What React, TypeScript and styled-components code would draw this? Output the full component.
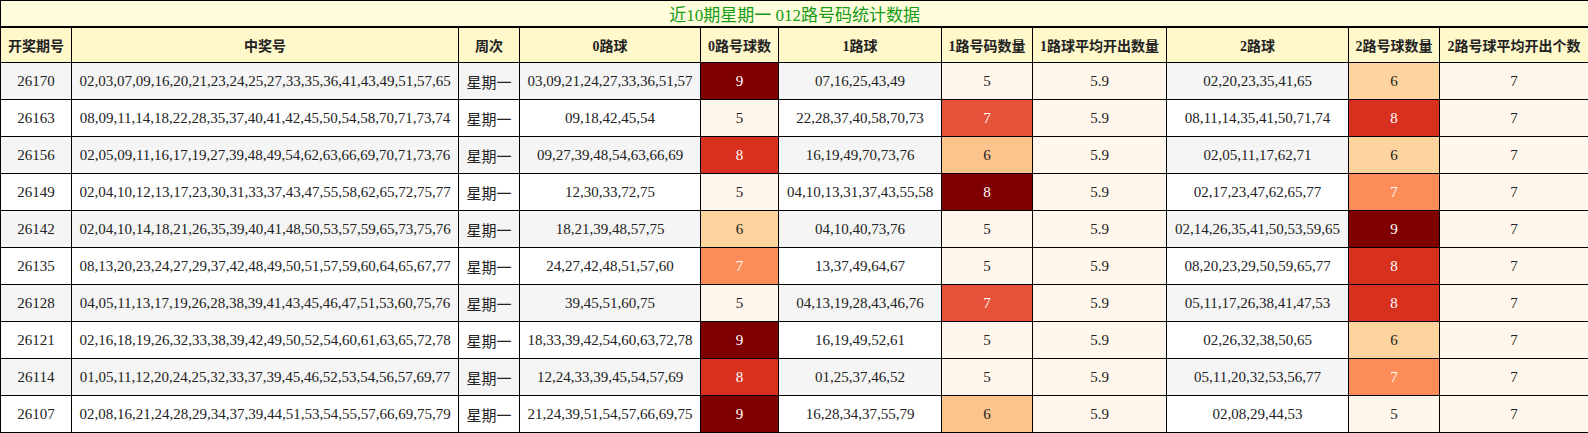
import styled, { createGlobalStyle } from "styled-components";

type Draw = {
  issue: string;
  numbers: string;
  weekday: string;
  road0: string;
  road1: string;
  road2: string;
};

const draws: Draw[] = [
  { issue: "26170", numbers: "02,03,07,09,16,20,21,23,24,25,27,33,35,36,41,43,49,51,57,65", weekday: "星期一", road0: "03,09,21,24,27,33,36,51,57", road1: "07,16,25,43,49", road2: "02,20,23,35,41,65" },
  { issue: "26163", numbers: "08,09,11,14,18,22,28,35,37,40,41,42,45,50,54,58,70,71,73,74", weekday: "星期一", road0: "09,18,42,45,54", road1: "22,28,37,40,58,70,73", road2: "08,11,14,35,41,50,71,74" },
  { issue: "26156", numbers: "02,05,09,11,16,17,19,27,39,48,49,54,62,63,66,69,70,71,73,76", weekday: "星期一", road0: "09,27,39,48,54,63,66,69", road1: "16,19,49,70,73,76", road2: "02,05,11,17,62,71" },
  { issue: "26149", numbers: "02,04,10,12,13,17,23,30,31,33,37,43,47,55,58,62,65,72,75,77", weekday: "星期一", road0: "12,30,33,72,75", road1: "04,10,13,31,37,43,55,58", road2: "02,17,23,47,62,65,77" },
  { issue: "26142", numbers: "02,04,10,14,18,21,26,35,39,40,41,48,50,53,57,59,65,73,75,76", weekday: "星期一", road0: "18,21,39,48,57,75", road1: "04,10,40,73,76", road2: "02,14,26,35,41,50,53,59,65" },
  { issue: "26135", numbers: "08,13,20,23,24,27,29,37,42,48,49,50,51,57,59,60,64,65,67,77", weekday: "星期一", road0: "24,27,42,48,51,57,60", road1: "13,37,49,64,67", road2: "08,20,23,29,50,59,65,77" },
  { issue: "26128", numbers: "04,05,11,13,17,19,26,28,38,39,41,43,45,46,47,51,53,60,75,76", weekday: "星期一", road0: "39,45,51,60,75", road1: "04,13,19,28,43,46,76", road2: "05,11,17,26,38,41,47,53" },
  { issue: "26121", numbers: "02,16,18,19,26,32,33,38,39,42,49,50,52,54,60,61,63,65,72,78", weekday: "星期一", road0: "18,33,39,42,54,60,63,72,78", road1: "16,19,49,52,61", road2: "02,26,32,38,50,65" },
  { issue: "26114", numbers: "01,05,11,12,20,24,25,32,33,37,39,45,46,52,53,54,56,57,69,77", weekday: "星期一", road0: "12,24,33,39,45,54,57,69", road1: "01,25,37,46,52", road2: "05,11,20,32,53,56,77" },
  { issue: "26107", numbers: "02,08,16,21,24,28,29,34,37,39,44,51,53,54,55,57,66,69,75,79", weekday: "星期一", road0: "21,24,39,51,54,57,66,69,75", road1: "16,28,34,37,55,79", road2: "02,08,29,44,53" },
];

const headers = [
  "开奖期号",
  "中奖号",
  "周次",
  "0路球",
  "0路号球数",
  "1路球",
  "1路号码数量",
  "1路球平均开出数量",
  "2路球",
  "2路号球数量",
  "2路号球平均开出个数",
];

const colWidths = [71, 387, 61, 181, 78, 163, 91, 134, 182, 91, 149];

// OrRd, light to dark
const scale = ["#fff7ec", "#fee8c8", "#fdd49e", "#fdbb84", "#fc8d59", "#ef6548", "#d7301f", "#b30000", "#7f0000"];

const hexToRgb = (h: string) => [1, 3, 5].map((i) => parseInt(h.slice(i, i + 2), 16));

function heat(value: number, min: number, max: number) {
  const t = max === min ? 0 : (value - min) / (max - min);
  const pos = t * (scale.length - 1);
  const i = Math.min(Math.floor(pos), scale.length - 2);
  const f = pos - i;
  const a = hexToRgb(scale[i]);
  const b = hexToRgb(scale[i + 1]);
  const rgb = a.map((v, k) => Math.round(v + (b[k] - v) * f));
  return { bg: `rgb(${rgb.join(",")})`, light: t >= 0.5 };
}

const count = (s: string) => s.split(",").length;

const GlobalStyle = createGlobalStyle`
  html, body {
    margin: 0;
    padding: 0;
    background: #fff;
  }
`;

const Table = styled.table`
  width: 1588px;
  table-layout: fixed;
  border-collapse: collapse;
  font-family: "Liberation Serif", "Noto Sans CJK SC", serif;
  color: #222;
`;

const TitleCell = styled.th`
  height: 24px;
  padding: 0;
  border: 1px solid #000;
  border-bottom: 2px solid #000;
  background: #fffddc;
  color: #169b16;
  font-size: 17px;
  font-weight: normal;
  text-align: center;
`;

const HeadCell = styled.th`
  height: 34px;
  padding: 0;
  border: 1px solid #000;
  background: #fff8cb;
  font-size: 14px;
  font-weight: bold;
  text-align: center;
  white-space: nowrap;
`;

const Row = styled.tr<{ $striped: boolean }>`
  background: ${(p) => (p.$striped ? "#f5f5f5" : "#ffffff")};
`;

const Cell = styled.td`
  height: 36px;
  padding: 0;
  border: 1px solid #000;
  font-size: 15px;
  text-align: center;
  white-space: nowrap;
`;

const HeatCell = styled(Cell)<{ $bg: string; $light: boolean }>`
  background: ${(p) => p.$bg};
  color: ${(p) => (p.$light ? "#fff" : "#222")};
`;

const Weekday = styled(Cell)`
  font-family: "Noto Sans CJK SC", sans-serif;
  font-size: 15px;
`;

export default function App() {
  const c0 = draws.map((d) => count(d.road0));
  const c1 = draws.map((d) => count(d.road1));
  const c2 = draws.map((d) => count(d.road2));
  const avg1 = (c1.reduce((a, b) => a + b, 0) / c1.length).toFixed(1);
  const avg2 = Math.round(c2.reduce((a, b) => a + b, 0) / c2.length).toString();
  const range = (xs: number[]) => [Math.min(...xs), Math.max(...xs)] as const;
  const r0 = range(c0);
  const r1 = range(c1);
  const r2 = range(c2);
  const flat = heat(0, 0, 0);

  return (
    <>
      <GlobalStyle />
      <Table>
        <colgroup>
          {colWidths.map((w, i) => (
            <col key={i} style={{ width: w }} />
          ))}
        </colgroup>
        <thead>
          <tr>
            <TitleCell colSpan={11}>近10期星期一 012路号码统计数据</TitleCell>
          </tr>
          <tr>
            {headers.map((h) => (
              <HeadCell key={h}>{h}</HeadCell>
            ))}
          </tr>
        </thead>
        <tbody>
          {draws.map((d, i) => {
            const h0 = heat(c0[i], ...r0);
            const h1 = heat(c1[i], ...r1);
            const h2 = heat(c2[i], ...r2);
            return (
              <Row key={d.issue} $striped={i % 2 === 0}>
                <Cell>{d.issue}</Cell>
                <Cell>{d.numbers}</Cell>
                <Weekday>{d.weekday}</Weekday>
                <Cell>{d.road0}</Cell>
                <HeatCell $bg={h0.bg} $light={h0.light}>{c0[i]}</HeatCell>
                <Cell>{d.road1}</Cell>
                <HeatCell $bg={h1.bg} $light={h1.light}>{c1[i]}</HeatCell>
                <HeatCell $bg={flat.bg} $light={false}>{avg1}</HeatCell>
                <Cell>{d.road2}</Cell>
                <HeatCell $bg={h2.bg} $light={h2.light}>{c2[i]}</HeatCell>
                <HeatCell $bg={flat.bg} $light={false}>{avg2}</HeatCell>
              </Row>
            );
          })}
        </tbody>
      </Table>
    </>
  );
}
